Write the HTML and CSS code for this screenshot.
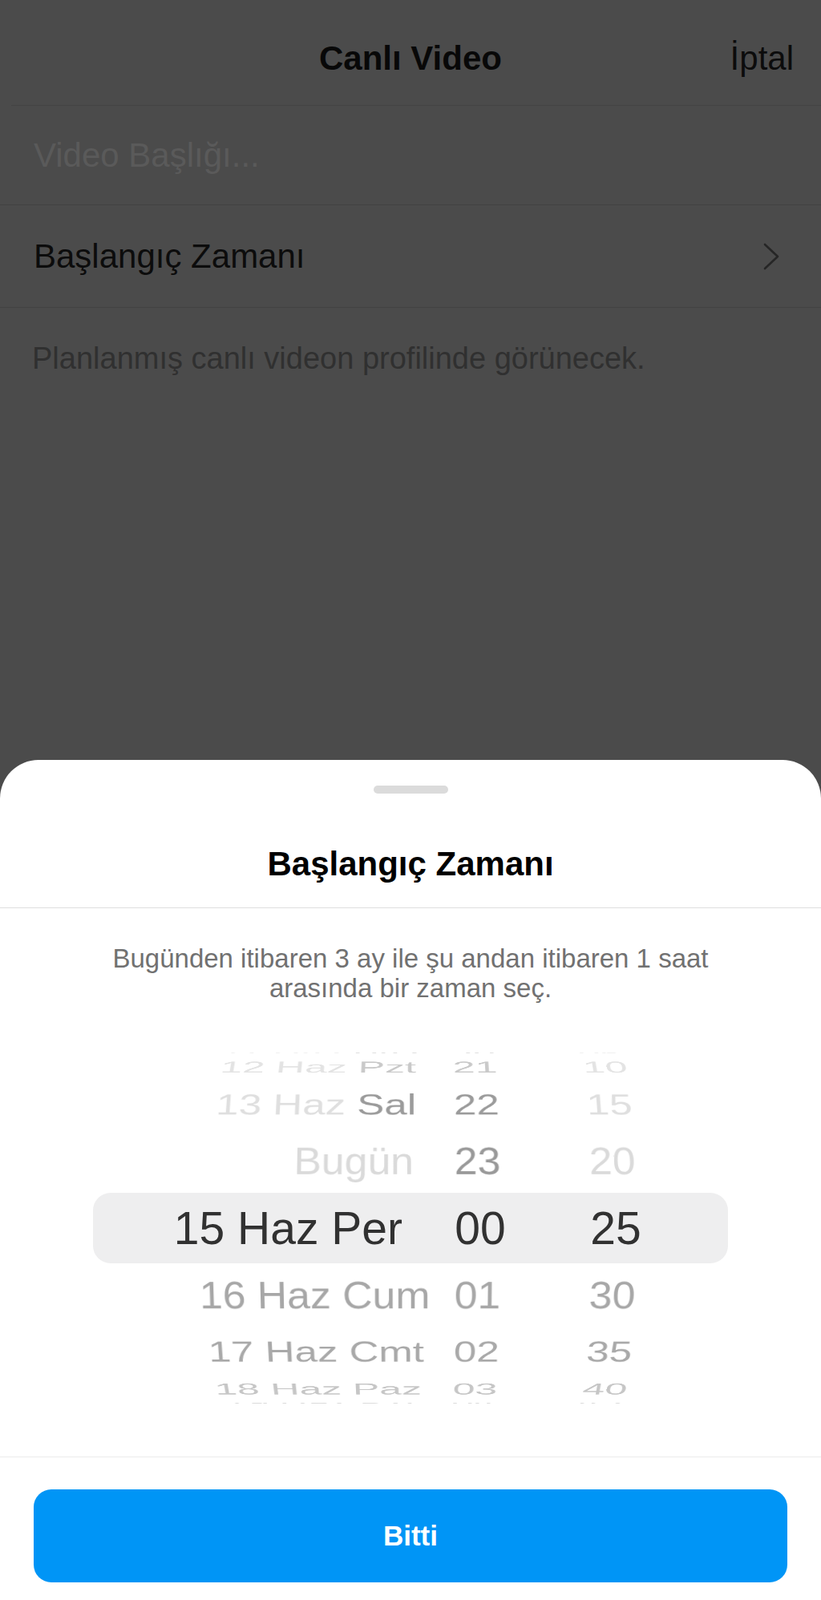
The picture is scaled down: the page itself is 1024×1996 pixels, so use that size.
FILE: index.html
```html
<!DOCTYPE html>
<html lang="tr">
<head>
  <meta charset="UTF-8">
  <meta name="viewport" content="width=device-width, initial-scale=1.0">
  <title>Canlı Video</title>
  <link rel="stylesheet" href="styles.css">
</head>
<body>
  <div class="screen">
    <!-- arka plan: canlı video formu -->
    <div class="form">
      <div class="header">
        <span></span>
        <span class="header-title">Canlı Video</span>
        <span class="header-cancel">İptal</span>
      </div>
      <div class="field placeholder">Video Başlığı...</div>
      <div class="field link">
        <span>Başlangıç Zamanı</span>
        <svg class="chevron" width="24" height="36" viewBox="0 0 24 36">
          <polyline points="4,3 20,18 4,33" fill="none" stroke="#262626" stroke-width="2.6" stroke-linecap="round" stroke-linejoin="round"/>
        </svg>
      </div>
      <p class="note">Planlanmış canlı videon profilinde görünecek.</p>
    </div>

    <!-- alt sayfa -->
    <div class="sheet">
      <div class="handle"></div>
      <h2 class="sheet-title">Başlangıç Zamanı</h2>
      <p class="sheet-text">Bugünden itibaren 3 ay ile şu andan itibaren 1 saat<br>arasında bir zaman seç.</p>

      <div class="picker">
        <div class="band"></div>
        <div class="row r-4"><span><span class="off">11 Haz</span> Paz</span><span>20</span><span class="off">05</span></div>
        <div class="row r-3"><span><span class="off">12 Haz</span> Pzt</span><span>21</span><span class="off">10</span></div>
        <div class="row r-2"><span><span class="off">13 Haz</span> Sal</span><span>22</span><span class="off">15</span></div>
        <div class="row r-1"><span class="off">Bugün</span><span>23</span><span class="off">20</span></div>
        <div class="row r0"><span>15 Haz Per</span><span>00</span><span>25</span></div>
        <div class="row r1"><span>16 Haz Cum</span><span>01</span><span>30</span></div>
        <div class="row r2"><span>17 Haz Cmt</span><span>02</span><span>35</span></div>
        <div class="row r3"><span>18 Haz Paz</span><span>03</span><span>40</span></div>
        <div class="row r4"><span>19 Haz Pzt</span><span>04</span><span>45</span></div>
      </div>

      <div class="sheet-footer">
        <button class="done">Bitti</button>
      </div>
    </div>
  </div>
</body>
</html>
```

FILE: styles.css
```css
* {
  margin: 0;
  padding: 0;
  box-sizing: border-box;
}
body {
  font-family: "Liberation Sans", Arial, sans-serif;
  background: #4b4b4b;
}
.screen {
  min-height: 100vh;
  display: flex;
  flex-direction: column;
}

/* form */
.header {
  height: 132px;
  margin-left: 14px;
  padding: 14px 34px 0 20px;
  display: grid;
  grid-template-columns: 1fr auto 1fr;
  align-items: center;
  border-bottom: 1px solid #434343;
  font-size: 42px;
}
.header-title {
  font-weight: 700;
  color: #080808;
}
.header-cancel {
  justify-self: end;
  color: #0c0c0c;
}
.field {
  height: 124px;
  padding: 0 50px 0 42px;
  display: flex;
  align-items: center;
  justify-content: space-between;
  font-size: 42px;
  border-bottom: 1px solid #424242;
}
.placeholder {
  color: #5a5a5a;
}
.link {
  height: 128px;
  color: #0c0c0c;
}
.note {
  padding: 40px 40px 0;
  font-size: 38px;
  line-height: 46px;
  color: #303030;
}

/* sheet */
.sheet {
  margin-top: auto;
  background: #fff;
  border-radius: 48px 48px 0 0;
  padding-top: 32px;
}
.handle {
  width: 93px;
  height: 10px;
  margin: 0 auto;
  border-radius: 5px;
  background: #dbdbdb;
}
.sheet-title {
  margin-top: 63px;
  padding-bottom: 29px;
  font-size: 42px;
  line-height: 50px;
  font-weight: 700;
  text-align: center;
  color: #000;
  border-bottom: 1px solid #dedede;
}
.sheet-text {
  padding-top: 44px;
  font-size: 33px;
  line-height: 37px;
  text-align: center;
  color: #717171;
}

/* tarih seçici */
.picker {
  height: 468px;
  margin-top: 47px;
  display: grid;
  overflow: hidden;
}
.picker > * {
  grid-area: 1 / 1;
  align-self: center;
}
.band {
  height: 88px;
  margin: 0 116px;
  border-radius: 22px;
  background: #eeeeef;
}
.row {
  display: grid;
  grid-template-columns: 248px 288px 120px 218px;
  font-size: 52px;
  line-height: 60px;
  white-space: nowrap;
  transform: perspective(3000px) translateZ(-235px) rotateX(var(--a)) translateZ(235px);
}
.row > span:first-child {
  grid-column: 2;
}
.row > span {
  justify-self: center;
}
.r-4 { --a: 84deg; color: #dedede; }
.r-3 { --a: 63deg; color: #c9c9c9; }
.r-2 { --a: 42deg; color: #9b9b9b; }
.r-1 { --a: 21deg; color: #999; }
.r0 { --a: 0deg; color: #313131; font-size: 57px; }
.r1 { --a: -21deg; color: #a7a7a7; }
.r2 { --a: -42deg; color: #a9a9a9; }
.r3 { --a: -63deg; color: #c6c6c6; }
.r4 { --a: -84deg; color: #dadada; }
.r-4 .off { color: #efefef; }
.r-3 .off { color: #e3e3e3; }
.r-2 .off { color: #dfdfdf; }
.r-1 .off { color: #dadada; }

/* seçili satır büyütülmüş görünür, kendi hizası var */
.r0 {
  grid-template-columns: 202px 300px 194px 144px;
}
.r0 > span:first-child,
.r-1 > span:first-child {
  justify-self: end;
}
.r-1 > span:first-child {
  padding-right: 20px;
}

.sheet-footer {
  margin-top: 51px;
  border-top: 1px solid #ececec;
  padding: 40px 42px 22px;
}
.done {
  display: block;
  width: 100%;
  height: 116px;
  border: 0;
  border-radius: 22px;
  background: #0095f6;
  color: #fff;
  font-family: inherit;
  font-size: 35px;
  font-weight: 700;
}
```
